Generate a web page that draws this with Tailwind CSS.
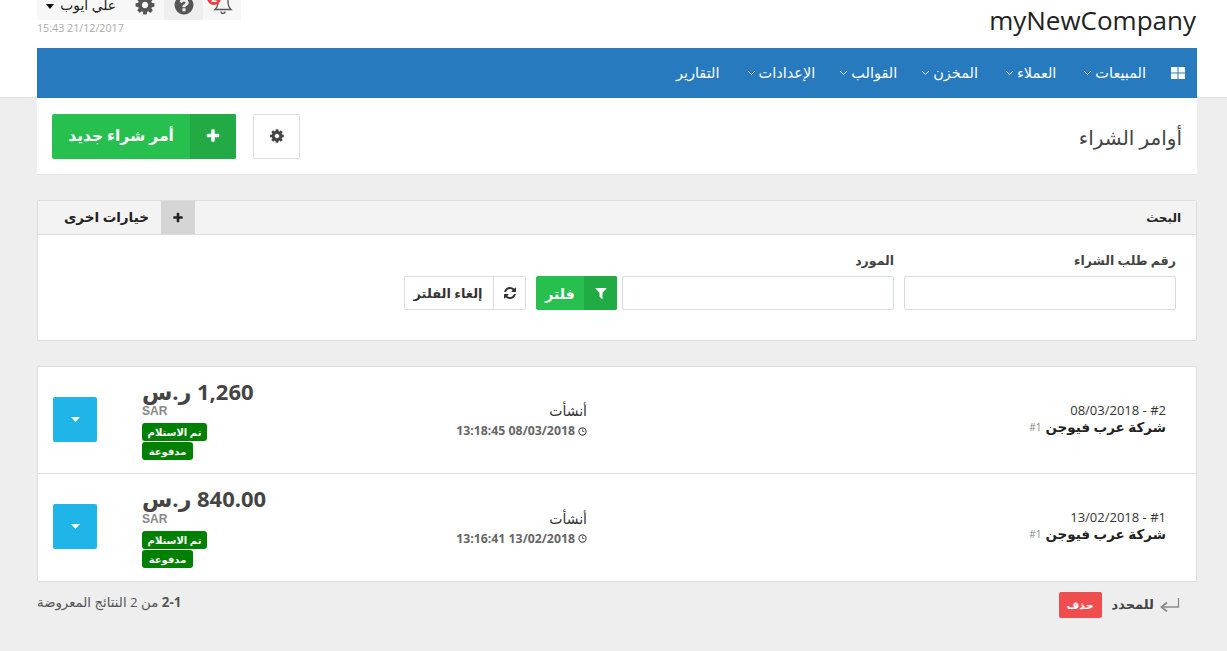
<!DOCTYPE html>
<html lang="ar" dir="rtl">
<head>
<meta charset="utf-8">
<script src="https://cdn.jsdelivr.net/npm/@tailwindcss/browser@4"></script>
</head>
<body class="bg-[#eeeeee] font-['Open_Sans','DejaVu_Sans',sans-serif] text-[#333] overflow-hidden h-[651px]">

<div class="bg-white h-[98px] border-b border-[#e3e3e3] box-border">
  <div class="ml-[37px] mr-[30px]">
    <header class="h-[48px] flex justify-between items-start">
      <div class="text-[26px] leading-[41px] text-[#222] pr-px" dir="ltr">myNewCompany</div>
      <div dir="ltr" class="w-[204px]">
        <div class="h-[20px] bg-[#f7f7f7] flex overflow-hidden">
          <div class="w-[88px] h-full flex items-start justify-end gap-[6px] text-[13.800px] leading-[12px] text-[#222] -mt-px pr-[9px]">
            <svg width="8" height="5" viewBox="0 0 8 5" class="mt-[5px]"><path d="M0 0h8L4 5z" fill="#111"/></svg>
            <span dir="rtl">علي ايوب</span>
          </div>
          <div class="w-[39px] h-full flex items-start justify-center">
            <svg width="22" height="22" viewBox="0 0 1792 1792" class="-mt-[6px]"><path fill="#555" d="M1152 896q0-106-75-181t-181-75-181 75-75 181 75 181 181 75 181-75 75-181zm512-109v222q0 12-8 23t-20 13l-185 28q-19 54-39 91 35 50 107 138 10 12 10 25t-9 23q-27 37-99 108t-94 71q-12 0-26-9l-138-108q-44 23-91 38-16 136-29 186-7 27-35 27h-222q-14 0-24.500-8.500t-11.500-21.500l-28-184q-49-16-90-37l-141 107q-10 9-25 9-14 0-25-11-126-114-165-168-7-10-7-23 0-12 8-23 15-21 51-66.500t54-70.500q-27-50-41-99l-183-27q-13-2-21-12.500t-8-23.500v-222q0-12 8-23t19-13l186-28q14-46 39-92-40-57-107-138-10-12-10-24 0-10 9-23 26-36 98.500-107.500t94.500-71.500q13 0 26 10l138 107q44-23 91-38 16-136 29-186 7-27 35-27h222q14 0 24.500 8.500t11.500 21.500l28 184q49 16 90 37l142-107q9-9 24-9 13 0 25 10 129 119 165 170 7 8 7 22 0 12-8 23-15 21-51 66.500t-54 70.500q26 50 41 98l183 28q13 2 21 12.500t8 23.500z"/></svg>
          </div>
          <div class="w-[39px] h-full bg-[#eeeeee] flex items-start justify-center">
            <svg width="22" height="22" viewBox="0 0 1792 1792" class="-mt-[6px]"><path fill="#555" d="M1024 1376v-192q0-14-9-23t-23-9h-192q-14 0-23 9t-9 23v192q0 14 9 23t23 9h192q14 0 23-9t9-23zm256-672q0-88-55.500-163t-138.500-116-170-41q-243 0-371 213-15 24 8 42l132 100q7 6 19 6 16 0 25-12 53-68 86-92 34-24 86-24 48 0 85.500 26t37.500 59q0 38-20 61t-68 45q-63 28-115.500 86.500t-52.500 125.500v36q0 14 9 23t23 9h192q14 0 23-9t9-23q0-19 21.500-49.500t54.500-49.500q32-18 49-28.500t46-35 44.500-48 28-60.500 12.500-81zm384 192q0 209-103 385.500t-279.500 279.500-385.500 103-385.500-103-279.500-279.500-103-385.500 103-385.500 279.500-279.500 385.500-103 385.500 103 279.500 279.500 103 385.500z"/></svg>
          </div>
          <div class="w-[38px] h-full relative">
            <svg width="20" height="20" viewBox="0 0 20 20" class="absolute left-[10px] top-[-6px]"><path d="M10 1.500c3.500 0 5 2.500 5 6 0 4 .8 6 3 8H2c2.200-2 3-4 3-8 0-3.500 1.500-6 5-6z" fill="none" stroke="#555" stroke-width="1.300"/><path d="M8 17.500a2 2 0 004 0" fill="none" stroke="#555" stroke-width="1.300"/></svg>
            <span class="absolute left-[4px] top-[-9px] w-[14px] h-[14px] rounded-full bg-[#ef3f3f] text-white text-[10px] leading-[14px] font-bold text-center">2</span>
          </div>
        </div>
        <div class="text-[10.700px] leading-[14px] mt-[1px] text-[#aaaaaa]">15:43 21/12/2017</div>
      </div>
    </header>
    <nav class="h-[50px] bg-[#267abd] flex items-center pr-[12px] text-white text-[14.500px]">
      <svg width="14" height="12" viewBox="0 0 14 12" class="ml-[25px]"><path fill="#fff" d="M0 0h6.500v5.500H0zM7.500 0H14v5.500H7.500zM0 6.500h6.500V12H0zM7.500 6.500H14V12H7.500z"/></svg>
      <span class="flex items-center gap-[3px] ml-[27px]">المبيعات<svg width="9" height="6" viewBox="0 0 9 6"><path d="M1 1l3.500 3.500L8 1" fill="none" stroke="#fff"/></svg></span>
      <span class="flex items-center gap-[3px] ml-[27px]">العملاء<svg width="9" height="6" viewBox="0 0 9 6"><path d="M1 1l3.500 3.500L8 1" fill="none" stroke="#fff"/></svg></span>
      <span class="flex items-center gap-[3px] ml-[24px]">المخزن<svg width="9" height="6" viewBox="0 0 9 6"><path d="M1 1l3.500 3.500L8 1" fill="none" stroke="#fff"/></svg></span>
      <span class="flex items-center gap-[3px] ml-[24px]">القوالب<svg width="9" height="6" viewBox="0 0 9 6"><path d="M1 1l3.500 3.500L8 1" fill="none" stroke="#fff"/></svg></span>
      <span class="flex items-center gap-[3px] ml-[27px]">الإعدادات<svg width="9" height="6" viewBox="0 0 9 6"><path d="M1 1l3.500 3.500L8 1" fill="none" stroke="#fff"/></svg></span>
      <span>التقارير</span>
    </nav>
  </div>
</div>

<main class="ml-[37px] mr-[30px]">
  <section class="h-[77px] bg-white border-b border-[#e5e5e5] flex items-center justify-between pr-[15px] pl-[15px]">
    <h1 class="text-[20px] text-[#444] mt-[4px]">أوامر الشراء</h1>
    <div class="flex items-center gap-[17px]">
      <button class="w-[47px] h-[45px] bg-white border border-[#dddddd] rounded-[2px] flex items-center justify-center">
        <svg width="16" height="16" viewBox="0 0 1792 1792"><path fill="#444" d="M1152 896q0-106-75-181t-181-75-181 75-75 181 75 181 181 75 181-75 75-181zm512-109v222q0 12-8 23t-20 13l-185 28q-19 54-39 91 35 50 107 138 10 12 10 25t-9 23q-27 37-99 108t-94 71q-12 0-26-9l-138-108q-44 23-91 38-16 136-29 186-7 27-35 27h-222q-14 0-24.500-8.500t-11.500-21.500l-28-184q-49-16-90-37l-141 107q-10 9-25 9-14 0-25-11-126-114-165-168-7-10-7-23 0-12 8-23 15-21 51-66.500t54-70.500q-27-50-41-99l-183-27q-13-2-21-12.500t-8-23.500v-222q0-12 8-23t19-13l186-28q14-46 39-92-40-57-107-138-10-12-10-24 0-10 9-23 26-36 98.500-107.500t94.500-71.500q13 0 26 10l138 107q44-23 91-38 16-136 29-186 7-27 35-27h222q14 0 24.500 8.500t11.500 21.500l28 184q49 16 90 37l142-107q9-9 24-9 13 0 25 10 129 119 165 170 7 8 7 22 0 12-8 23-15 21-51 66.500t-54 70.500q26 50 41 98l183 28q13 2 21 12.500t8 23.500z"/></svg>
      </button>
      <button class="w-[184px] h-[45px] bg-[#27c04f] rounded-[2px] flex items-center text-white font-bold text-[15.500px] overflow-hidden">
        <span class="w-[46px] h-full bg-[#22aa45] flex items-center justify-center">
          <svg width="16" height="16" viewBox="0 0 1792 1792"><path fill="#fff" d="M1600 736v192q0 40-28 68t-68 28h-416v416q0 40-28 68t-68 28h-192q-40 0-68-28t-28-68v-416h-416q-40 0-68-28t-28-68v-192q0-40 28-68t68-28h416v-416q0-40 28-68t68-28h192q40 0 68 28t28 68v416h416q40 0 68 28t28 68z"/></svg>
        </span>
        <span class="flex-1 text-center">أمر شراء جديد</span>
      </button>
    </div>
  </section>

  <section class="mt-[25px] h-[141px] bg-white border border-[#dddddd] rounded-[2px]">
    <div class="h-[34px] bg-[#f3f3f3] border-b border-[#dddddd] flex items-center justify-between pr-[15px]">
      <h2 class="text-[12px] font-bold text-[#222]">البحث</h2>
      <div class="h-full flex items-center pl-[26px]">
        <span class="w-[34px] h-full bg-[#d5d5d5] flex items-center justify-center">
          <svg width="12" height="12" viewBox="0 0 1792 1792"><path fill="#222" d="M1600 736v192q0 40-28 68t-68 28h-416v416q0 40-28 68t-68 28h-192q-40 0-68-28t-28-68v-416h-416q-40 0-68-28t-28-68v-192q0-40 28-68t68-28h416v-416q0-40 28-68t68-28h192q40 0 68 28t28 68v416h416q40 0 68 28t28 68z"/></svg>
        </span>
        <span class="text-[13.500px] font-bold text-[#222] mr-[12px]">خيارات اخرى</span>
      </div>
    </div>
    <form class="flex items-end gap-[10px] pr-[20px] pt-[17px]">
      <label class="block w-[272px]">
        <span class="block text-[12.500px] leading-[16px] font-bold text-[#444] mb-[7px] pt-[2px] -mt-px">رقم طلب الشراء</span>
        <input class="block w-full h-[34px] border border-[#d5dede] rounded-[2px] bg-white">
      </label>
      <label class="block w-[272px]">
        <span class="block text-[12.500px] leading-[16px] font-bold text-[#444] mb-[7px] pt-[2px] -mt-px">المورد</span>
        <input class="block w-full h-[34px] border border-[#d5dede] rounded-[2px] bg-white">
      </label>
      <div class="flex items-center -mr-[5px] gap-[10px]">
        <button type="button" class="w-[81px] h-[34px] bg-[#27c04f] rounded-[2px] flex items-center text-white font-bold text-[14px] overflow-hidden">
          <span class="w-[33px] h-full bg-[#22aa45] flex items-center justify-center">
            <svg width="14" height="14" viewBox="0 0 1792 1792"><path fill="#fff" d="M1595 295q17 41-14 70l-493 493v742q0 42-39 59-13 5-25 5-27 0-45-19l-256-256q-19-19-19-45v-486l-493-493q-31-29-14-70 17-39 59-39h1280q42 0 59 39z"/></svg>
          </span>
          <span class="flex-1 text-center">فلتر</span>
        </button>
        <button type="button" class="w-[122px] h-[34px] bg-white border border-[#dddddd] rounded-[2px] flex items-center text-[#333] font-bold text-[13px]">
          <span class="w-[32px] h-full border-l border-[#dddddd] flex items-center justify-center">
            <svg width="14" height="14" viewBox="0 0 1792 1792"><path fill="#333" d="M1639 1056q0 5-1 7-64 268-268 434.500t-478 166.500q-146 0-282.500-55t-243.500-157l-129 129q-19 19-45 19t-45-19-19-45v-448q0-26 19-45t45-19h448q26 0 45 19t19 45-19 45l-137 137q71 66 161 102t187 36q134 0 250-65t186-179q11-17 53-117 8-23 30-23h192q13 0 22.500 9.500t9.500 22.500zm25-800v448q0 26-19 45t-45 19h-448q-26 0-45-19t-19-45 19-45l138-138q-148-137-349-137-134 0-250 65t-186 179q-11 17-53 117-8 23-30 23h-199q-13 0-22.500-9.500t-9.500-22.500v-7q65-268 270-434.500t480-166.500q146 0 284 55.500t245 156.500l130-129q19-19 45-19t45 19 19 45z"/></svg>
          </span>
          <span class="flex-1 text-center pr-[2px] pt-[2px]">إلغاء الفلتر</span>
        </button>
      </div>
    </form>
  </section>

  <section class="mt-[25px] bg-white border border-[#dddddd] rounded-[2px]">
    <article class="h-[107px] border-b border-[#dddddd] flex items-center pl-[15px]">
      <div class="w-[609px] pr-[30px] shrink-0 -mt-[1px]">
        <div class="text-[13px] leading-[16px] text-[#333]">#2 - 08/03/2018</div>
        <div class="text-[13.500px] leading-[19px] font-bold text-[#222] flex items-center gap-[4px]">شركة عرب فيوجن <span class="text-[10px] font-normal text-[#888]">#1</span></div>
      </div>
      <div class="w-[297px] shrink-0 mt-[2px]">
        <div class="text-[14px] leading-[20px] text-[#333]">أنشأت</div>
        <div class="text-[12.300px] leading-[20px] font-bold text-[#666] flex items-center gap-[3px]">
          <svg width="9" height="9" viewBox="0 0 10 10"><circle cx="5" cy="5" r="4" fill="none" stroke="#555" stroke-width="1.300"/><path d="M5 2.500V5h2" fill="none" stroke="#555"/></svg>
          <span dir="ltr">13:18:45 08/03/2018</span>
        </div>
      </div>
      <div class="w-[148px] shrink-0 flex flex-col items-end">
        <div class="text-[22px] leading-[24px] font-bold text-[#444] -mt-px">1,260 ر.س</div>
        <div class="font-['Liberation_Sans',sans-serif] text-[12px] leading-[14px] font-bold text-[#888] w-full text-left mb-[5px] mt-px">SAR</div>
        <span class="h-[18px] w-[65px] rounded-[3px] bg-[#008000] text-white text-[10px] font-bold leading-[18px] text-center mb-px">تم الاستلام</span>
        <span class="h-[18px] w-[51px] rounded-[3px] bg-[#008000] text-white text-[10px] font-bold leading-[18px] text-center">مدفوعة</span>
      </div>
      <button class="w-[44px] h-[45px] ms-[45px] -mt-[2px] bg-[#1fb5e8] rounded-[2px] flex items-center justify-center">
        <svg width="9" height="5" viewBox="0 0 9 5"><path d="M0 0h9L4.500 5z" fill="#fff"/></svg>
      </button>
    </article>
    <article class="h-[107px] flex items-center pl-[15px]">
      <div class="w-[609px] pr-[30px] shrink-0 -mt-[3px]">
        <div class="text-[13px] leading-[16px] text-[#333]">#1 - 13/02/2018</div>
        <div class="text-[13.500px] leading-[19px] font-bold text-[#222] flex items-center gap-[4px]">شركة عرب فيوجن <span class="text-[10px] font-normal text-[#888]">#1</span></div>
      </div>
      <div class="w-[297px] shrink-0 mt-[2px]">
        <div class="text-[14px] leading-[20px] text-[#333]">أنشأت</div>
        <div class="text-[12.300px] leading-[20px] font-bold text-[#666] flex items-center gap-[3px]">
          <svg width="9" height="9" viewBox="0 0 10 10"><circle cx="5" cy="5" r="4" fill="none" stroke="#555" stroke-width="1.300"/><path d="M5 2.500V5h2" fill="none" stroke="#555"/></svg>
          <span dir="ltr">13:16:41 13/02/2018</span>
        </div>
      </div>
      <div class="w-[148px] shrink-0 flex flex-col items-end mt-[1px]">
        <div class="text-[22px] leading-[24px] font-bold text-[#444] -mt-[3px]">840.00 ر.س</div>
        <div class="font-['Liberation_Sans',sans-serif] text-[12px] leading-[14px] font-bold text-[#888] w-full text-left mb-[5px] mt-[2px]">SAR</div>
        <span class="h-[18px] w-[65px] rounded-[3px] bg-[#008000] text-white text-[10px] font-bold leading-[18px] text-center mb-px">تم الاستلام</span>
        <span class="h-[18px] w-[51px] rounded-[3px] bg-[#008000] text-white text-[10px] font-bold leading-[18px] text-center">مدفوعة</span>
      </div>
      <button class="w-[44px] h-[45px] ms-[45px] -mt-[2px] bg-[#1fb5e8] rounded-[2px] flex items-center justify-center">
        <svg width="9" height="5" viewBox="0 0 9 5"><path d="M0 0h9L4.500 5z" fill="#fff"/></svg>
      </button>
    </article>
  </section>

  <footer class="mt-[10px] flex items-center justify-between pr-[17px]">
    <div class="flex items-center">
      <svg width="20" height="14" viewBox="0 0 20 14" class="ml-[6px]"><path d="M18.500 0v9H3" fill="none" stroke="#8a8a8a" stroke-width="1.300"/><path d="M7 4.500L1.500 9 7 13.500" fill="none" stroke="#8a8a8a" stroke-width="1.800"/></svg>
      <span class="text-[13px] font-bold text-[#444] ml-[10px]">للمحدد</span>
      <button class="w-[43px] h-[26px] rounded-[2px] bg-[#f04e4e] text-white text-[11px] font-bold">حذف</button>
    </div>
    <div class="text-[13.300px] text-[#555] -mt-[4px]"><b>2-1</b> من 2 النتائج المعروضة</div>
  </footer>
</main>
</body>
</html>
